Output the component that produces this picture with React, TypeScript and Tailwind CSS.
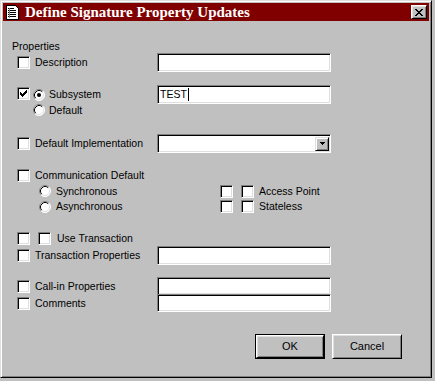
import React from 'react'

const font = "font-['Liberation_Sans',Arial,sans-serif] text-[10.5px] leading-none text-black"

function Check({ checked }: { checked?: boolean }) {
  return (
    <span className="relative flex h-[13px] w-[13px] shrink-0 items-center justify-center border border-t-[#808080] border-l-[#808080] border-b-white border-r-white bg-white shadow-[inset_1px_1px_0_#000,inset_-1px_-1px_0_#dfdfdf]">
      {checked && (
        <svg width="7" height="7" viewBox="0 0 7 7" shapeRendering="crispEdges">
          <path
            d="M6 0h1v1h-1z M5 1h2v1h-2z M0 2h1v1h-1z M4 2h3v1h-3z M0 3h2v1h-2z M3 3h3v1h-3z M0 4h5v1h-5z M1 5h3v1h-3z M2 6h1v1h-1z"
            fill="#000"
          />
        </svg>
      )}
    </span>
  )
}

function Radio({ on }: { on?: boolean }) {
  return (
    <svg width="12" height="12" viewBox="0 0 12 12" className="shrink-0">
      <circle cx="6" cy="6" r="5.5" fill="#fff" />
      <path d="M2.11 9.89 A5.5 5.5 0 0 1 9.89 2.11" stroke="#808080" fill="none" />
      <path d="M9.89 2.11 A5.5 5.5 0 0 1 2.11 9.89" stroke="#fff" fill="none" />
      <path d="M2.82 9.18 A4.5 4.5 0 0 1 9.18 2.82" stroke="#000" fill="none" />
      <path d="M9.18 2.82 A4.5 4.5 0 0 1 2.82 9.18" stroke="#dfdfdf" fill="none" />
      {on && <circle cx="6" cy="6" r="2" fill="#000" />}
    </svg>
  )
}

function Field({ h = 'h-[19px]', children }: { h?: string; children?: React.ReactNode }) {
  return (
    <div
      className={`flex w-[174px] items-center border border-t-[#808080] border-l-[#808080] border-b-white border-r-white bg-white pl-[2px] shadow-[inset_1px_1px_0_#000,inset_-1px_-1px_0_#dfdfdf] ${h}`}
    >
      {children}
    </div>
  )
}

function CheckRow({ label, field, h = 'h-[19px]', fh }: { label: string; field?: boolean; h?: string; fh?: string }) {
  return (
    <div className={`flex items-center ${h}`}>
      <div className="flex w-[140px] items-center">
        <Check />
        <span className="ml-[5px]">{label}</span>
      </div>
      {field && <Field h={fh ?? h} />}
    </div>
  )
}

function Button({ children, isDefault }: { children: React.ReactNode; isDefault?: boolean }) {
  return (
    <div className={`h-[25px] w-[70px] ${isDefault ? 'border border-black' : ''}`}>
      <div className="flex h-full w-full items-center justify-center border border-t-white border-l-white border-b-black border-r-black bg-[#c0c0c0] text-[11px] shadow-[inset_1px_1px_0_#dfdfdf,inset_-1px_-1px_0_#808080]">
        {children}
      </div>
    </div>
  )
}

export default function App() {
  return (
    <div className={`h-[381px] w-[435px] bg-[#c0c0c0] ${font}`}>
      <div className="h-[378px] w-[432px] border border-t-[#dfdfdf] border-l-[#dfdfdf] border-b-black border-r-black p-[2px] shadow-[inset_1px_1px_0_#fff,inset_-1px_-1px_0_#808080]">
        {/* title bar */}
        <div className="flex h-[18px] items-center bg-[#800000] pl-[3px] pr-[2px]">
          <svg width="13" height="15" viewBox="0 0 13 15" shapeRendering="crispEdges" className="shrink-0">
            <path d="M0.5 0.5h9l3 3v11h-12z" fill="#fff" stroke="#000" />
            <path d="M2 3h6v1h-6z M2 5h8v1h-8z M2 7h8v1h-8z M2 9h8v1h-8z M2 11h8v1h-8z" fill="#000" />
            <path d="M3 3h1v10h-1z" fill="#808080" />
          </svg>
          <span className="ml-[6px] font-['Liberation_Serif',serif] text-[15px] font-bold text-white">
            Define Signature Property Updates
          </span>
          <div className="ml-auto flex h-[14px] w-[16px] items-center justify-center border border-t-white border-l-white border-b-black border-r-black bg-[#c0c0c0] shadow-[inset_1px_1px_0_#dfdfdf,inset_-1px_-1px_0_#808080]">
            <svg width="8" height="7" viewBox="0 0 8 7" shapeRendering="crispEdges">
              <path
                d="M0 0h2v1h-2z M6 0h2v1h-2z M1 1h2v1h-2z M5 1h2v1h-2z M2 2h4v1h-4z M3 3h2v1h-2z M2 4h4v1h-4z M1 5h2v1h-2z M5 5h2v1h-2z M0 6h2v1h-2z M6 6h2v1h-2z"
                fill="#000"
              />
            </svg>
          </div>
        </div>

        {/* body */}
        <div className="pl-[14px]">
          <div className="ml-[-5px] mt-[18px] flex h-[14px] items-center">Properties</div>

          <CheckRow label="Description" field />

          <div className="mt-[13px] flex h-[19px] items-center">
            <div className="flex w-[140px] items-center">
              <span className="mt-[-2px]">
                <Check checked />
              </span>
              <span className="ml-[3px]">
                <Radio on />
              </span>
              <span className="ml-[4px]">Subsystem</span>
            </div>
            <Field>
              <span>TEST</span>
              <span className="ml-[1px] h-[13px] w-px bg-black" />
            </Field>
          </div>

          <div className="flex h-[12px] items-center">
            <span className="ml-[16px]">
              <Radio />
            </span>
            <span className="ml-[4px]">Default</span>
          </div>

          <div className="mt-[18px] flex h-[19px] items-center">
            <div className="flex w-[140px] items-center">
              <Check />
              <span className="ml-[5px]">Default Implementation</span>
            </div>
            <Field>
              <div className="ml-auto mr-[1px] flex h-[14px] w-[14px] items-center justify-center border border-t-[#dfdfdf] border-l-[#dfdfdf] border-b-black border-r-black bg-[#c0c0c0] shadow-[inset_1px_1px_0_#fff,inset_-1px_-1px_0_#808080]">
                <svg width="5" height="3" viewBox="0 0 5 3" shapeRendering="crispEdges">
                  <path d="M0 0h5v1h-5z M1 1h3v1h-3z M2 2h1v1h-1z" fill="#000" />
                </svg>
              </div>
            </Field>
          </div>

          <div className="mt-[15px]">
            <CheckRow label="Communication Default" h="h-[14px]" />
          </div>

          <div className="mt-[1px] flex h-[16px] items-center">
            <div className="flex w-[203px] items-center">
              <span className="ml-[22px]">
                <Radio />
              </span>
              <span className="ml-[5px]">Synchronous</span>
            </div>
            <Check />
            <span className="ml-[8px]">
              <Check />
            </span>
            <span className="ml-[5px]">Access Point</span>
          </div>

          <div className="flex h-[15px] items-center">
            <div className="flex w-[203px] items-center">
              <span className="ml-[22px]">
                <Radio />
              </span>
              <span className="ml-[5px]">Asynchronous</span>
            </div>
            <Check />
            <span className="ml-[8px]">
              <Check />
            </span>
            <span className="ml-[5px]">Stateless</span>
          </div>

          <div className="mt-[17px] flex h-[14px] items-center">
            <Check />
            <span className="ml-[8px]">
              <Check />
            </span>
            <span className="ml-[6px]">Use Transaction</span>
          </div>

          <div className="mt-[1px]">
            <CheckRow label="Transaction Properties" field />
          </div>

          <div className="mt-[12px]">
            <CheckRow label="Call-in Properties" field h="h-[18px]" />
          </div>
          <div className="mt-[-1px]">
            <CheckRow label="Comments" field h="h-[18px]" />
          </div>

          <div className="mt-[22px] flex gap-[7px] pl-[238px]">
            <Button isDefault>OK</Button>
            <Button>Cancel</Button>
          </div>
        </div>
      </div>
    </div>
  )
}
